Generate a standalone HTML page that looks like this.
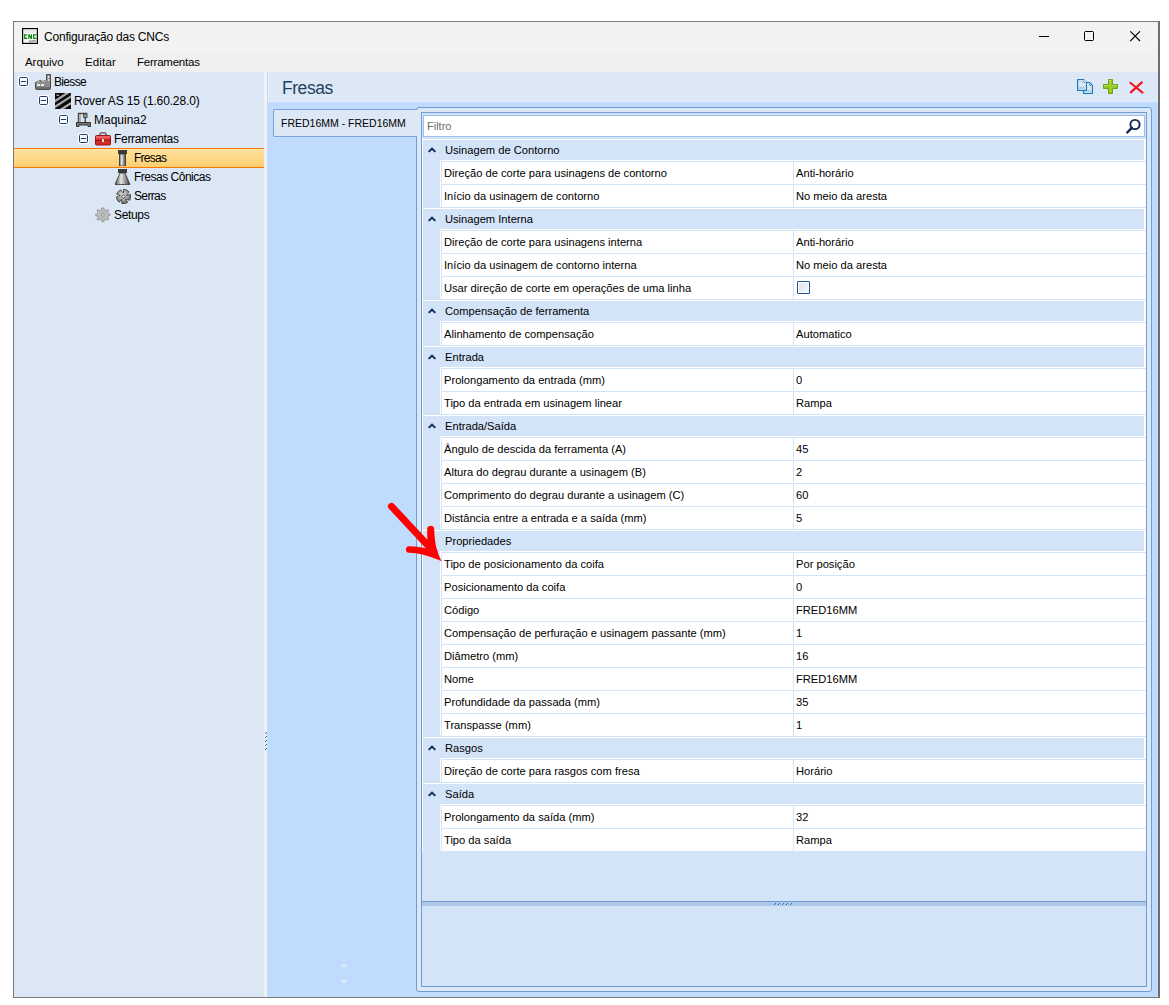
<!DOCTYPE html>
<html><head><meta charset="utf-8">
<style>
*,*:before,*:after{margin:0;padding:0;box-sizing:border-box}
html,body{width:1169px;height:1005px;background:#fff;overflow:hidden;font-family:"Liberation Sans",sans-serif;color:#000}
div,span,i,b,svg{position:absolute;display:block}
#win{left:13px;top:21px;width:1147px;height:977px;border:1px solid #7a7a7a;border-right:2px solid #6e6e6e;background:#f0f0f0}
#title{left:14px;top:22px;width:1144px;height:30px;background:#f2f2f2}
#ttext{left:44px;top:28px;font-size:12px;line-height:18px;letter-spacing:-0.21px;white-space:nowrap;color:#000}
#menu{left:14px;top:52px;width:1144px;height:20px;background:#f0f0f0}
.mi{top:55px;font-size:11.5px;line-height:14px;white-space:nowrap}
#tree{left:14px;top:72px;width:250px;height:925px;background:#dce7f5}
#split{left:264px;top:72px;width:3px;height:925px;background:#f1f1f1}
#hdr{left:268px;top:72px;width:890px;height:30px;background:#dde8f6;border-left:1px solid #e4eef9;border-bottom:1px solid #e4eef9}
#htext{left:282px;top:76px;font-size:17.5px;line-height:24px;letter-spacing:-0.45px;color:#24405f;white-space:nowrap}
#blue{left:267px;top:72px;width:891px;height:925px;background:#bfdbfd}
.trow{left:14px;height:19px;line-height:19px;width:250px;white-space:nowrap;font-size:12px}
.tt{top:0}
.ebox{width:9px;height:9px;border:1px solid #1e3a6e;border-radius:1.5px;background:#f7fafd;box-shadow:0 0 0 1px #fff}
.ebox:after{content:"";position:absolute;left:1px;top:3px;width:5px;height:1px;background:#1e3a6e}
#sel{left:14px;top:148px;width:250px;height:20px;border-top:1px solid #fb7603;border-bottom:1px solid #fb7603;background:linear-gradient(#ffeab0 0,#fee09a 8%,#fdd47e 70%,#fdce70 100%)}
#tab{left:273px;top:109px;width:144px;height:28px;border:1px solid #79a3d9;border-right:none;border-radius:2px 0 0 2px;background:#dde8f6}
#tabtext{left:281px;top:116px;font-size:10.5px;line-height:14px;white-space:nowrap}
#page{left:416px;top:107px;width:736px;height:885px;border:1px solid #6f9cd7;border-radius:3px;background:#dde8f6}
#tabjoin{left:416px;top:110px;width:3px;height:26px;background:#dde8f6}
#grid{left:421px;top:112px;width:726px;height:875px;border:1px solid #6f9cd7;background:#d3e4f9}
#filt{left:423px;top:115px;width:722px;height:22px;border:1px solid #9dbfe9;background:#fff}
#ftext{left:427px;top:119px;font-size:11px;line-height:14px;color:#6d6d6d}
#rowsbg{left:422px;top:138px;width:724px;height:714px;border-left:1px solid #fff}
.grow{left:423px;width:723px;height:23px;background:#d3e4f9;border-top:1px solid #d3e3f6}
.grow:before{content:"";position:absolute;left:-1px;top:0;width:724px;height:22px;border-top:1px solid #fff;border-left:1px solid #fff;border-right:2px solid #fff}
.grow span{left:22px;top:0;line-height:22px;font-size:11.15px;white-space:nowrap}
.chev{left:5px;top:8px}
.crow{left:440px;width:706px;height:24px;background:#fff;border-left:1px solid #fff;border-top:1px solid #fff}
.ci{left:0;top:0;width:705px;height:23px;border-left:1px solid #d3e4f9;border-top:1px solid #d3e4f9}
.n{left:2px;top:0;line-height:22px;font-size:11.15px;white-space:nowrap}
.div{left:351px;top:0;width:1px;height:22px;background:#d3e4f9}
.v{left:354px;top:0;line-height:22px;font-size:11.15px;white-space:nowrap}
.cb{left:355px;top:4px;width:13px;height:13px;border:1px solid #1f5391;border-radius:1px;background:linear-gradient(135deg,#dde2ee,#f3f5f9);box-shadow:inset 0 0 0 1px #fff}
#gspl{left:422px;top:901px;width:724px;height:1px;background:#6f9cd7}
#gband{left:422px;top:902px;width:724px;height:4px;background:#afc7e6}
</style></head><body>
<div id="win"></div>
<div id="title"></div>
<svg style="left:22px;top:28px" width="16" height="16" viewBox="0 0 16 16">
 <rect x="0.6" y="0.6" width="14.8" height="14.8" fill="#f6f6f6" stroke="#000" stroke-width="1.2"/>
 <rect x="2" y="2" width="12" height="3" fill="#e9e9e9"/>
 <g fill="#078a07"><path d="M2 6.2H5.3V7.4H3.3V9.8H5.3V11H2Z"/><path d="M6.3 6.2H7.5L8.9 8.6V6.2H10V11H8.8L7.4 8.6V11H6.3Z"/><path d="M11 6.2H14.4V7.4H12.2V9.8H14.4V11H11Z"/></g>
 <path d="M7 12H14.5V14.5H7Z" fill="#a8a8a8"/><path d="M8 12.5H10M11 13.5H14" stroke="#d8d8d8" stroke-width="0.6"/>
</svg>
<span id="ttext">Configuração das CNCs</span>
<svg style="left:1039px;top:36px" width="10" height="1"><rect width="10" height="1" fill="#000"/></svg>
<svg style="left:1084px;top:31px" width="11" height="11"><rect x="0.5" y="0.5" width="9" height="9" rx="1" fill="none" stroke="#000" stroke-width="1"/></svg>
<svg style="left:1130px;top:31px" width="11" height="11"><path d="M0.3 0.3L10 10M10 0.3L0.3 10" stroke="#000" stroke-width="1.1"/></svg>
<div id="menu"></div>
<span class="mi" style="left:25px;letter-spacing:-0.06px">Arquivo</span>
<span class="mi" style="left:85px;letter-spacing:0.15px">Editar</span>
<span class="mi" style="left:137px;letter-spacing:-0.23px">Ferramentas</span>
<div id="tree"></div>
<div id="sel"></div>
<b class="ebox" style="left:19px;top:77px"></b><div style="left:35px;top:74px"><svg width="16" height="16" viewBox="0 0 16 16">
<path d="M0.5 14.5V8.5L6 6.2V8L11.5 6V0.5H15.5V14.5Q15.5 15.5 14.5 15.5H1.5Q0.5 15.5 0.5 14.5Z" fill="#8c8c8c" stroke="#4a4a4a" stroke-width="1"/>
<path d="M1.5 8.7L5.5 7M6.5 8.2L11 6.5" stroke="#d0d0d0" stroke-width="0.8"/>
<rect x="2" y="10" width="3" height="2" fill="#ededed"/><rect x="6" y="10" width="3" height="2" fill="#ededed"/>
<rect x="12.8" y="1.8" width="1.6" height="2.2" fill="#e0e0e0"/><rect x="12.8" y="5" width="1.6" height="2.2" fill="#e0e0e0"/>
<rect x="1" y="13" width="14" height="2" fill="#6e6e6e"/>
</svg></div><span class="trow" style="left:54px;top:73px;width:auto;letter-spacing:-0.67px">Biesse</span>
<b class="ebox" style="left:39px;top:96px"></b><div style="left:55px;top:93px"><svg width="16" height="16" viewBox="0 0 16 16">
<rect width="16" height="16" fill="#0a0a0a"/>
<path d="M-1 8.75L17 -2.95M-1 14.55L17 2.85M-1 21.15L17 9.45" stroke="#a9a9a9" stroke-width="2.3"/>
<rect x="1.5" y="1.5" width="2.5" height="1.5" fill="#999"/>
</svg></div><span class="trow" style="left:74px;top:92px;width:auto;letter-spacing:-0.14px">Rover AS 15 (1.60.28.0)</span>
<b class="ebox" style="left:59px;top:115px"></b><div style="left:76px;top:112px"><svg width="16" height="16" viewBox="0 0 16 16">
<path d="M2.5 11V1.5H10.5V5.5" fill="none" stroke="#444" stroke-width="1.4"/>
<rect x="3" y="2" width="2" height="9" fill="#b0b0b0"/>
<rect x="7.5" y="2" width="3.5" height="3.5" fill="#999" stroke="#444" stroke-width="0.8"/>
<rect x="8.6" y="5.5" width="1.3" height="4.5" fill="#333"/>
<path d="M0.5 10.5H14.5V14.5H12V13H3V14.5H0.5Z" fill="#777" stroke="#333" stroke-width="1"/>
</svg></div><span class="trow" style="left:94px;top:111px;width:auto;letter-spacing:0px">Maquina2</span>
<b class="ebox" style="left:79px;top:134px"></b><div style="left:95px;top:132px"><svg width="16" height="14" viewBox="0 0 16 14">
<path d="M5 4V2.2Q5 0.8 6.5 0.8H9.5Q11 0.8 11 2.2V4" fill="none" stroke="#555" stroke-width="1.3"/>
<rect x="0.5" y="3.5" width="15" height="9.5" rx="1" fill="#d42a2a" stroke="#9b1414" stroke-width="1"/>
<rect x="1" y="4" width="14" height="2.5" fill="#f06060"/>
<rect x="1" y="8" width="14" height="1" fill="#a01818"/>
<rect x="7" y="7" width="2" height="3" fill="#ddd"/>
</svg></div><span class="trow" style="left:114px;top:130px;width:auto;letter-spacing:-0.31px">Ferramentas</span>
<div style="left:118px;top:150px"><svg width="10" height="16" viewBox="0 0 10 16">
<defs><linearGradient id="gm" x1="0" x2="1"><stop offset="0" stop-color="#555"/><stop offset="0.35" stop-color="#e8e8e8"/><stop offset="1" stop-color="#444"/></linearGradient></defs>
<rect x="0" y="0" width="9" height="4" fill="#3c3c3c"/>
<rect x="1.5" y="4" width="6" height="12" fill="url(#gm)" stroke="#333" stroke-width="0.8"/>
</svg></div><span class="trow" style="left:134px;top:149px;width:auto;letter-spacing:-0.73px">Fresas</span>
<div style="left:115px;top:169px"><svg width="16" height="16" viewBox="0 0 16 16">
<defs><linearGradient id="gc" x1="0" x2="1"><stop offset="0" stop-color="#444"/><stop offset="0.4" stop-color="#e6e6e6"/><stop offset="1" stop-color="#3a3a3a"/></linearGradient></defs>
<rect x="3" y="0" width="9" height="4" fill="#3c3c3c"/>
<path d="M5 4H10L15 15.5H0Z" fill="url(#gc)" stroke="#333" stroke-width="0.8"/>
</svg></div><span class="trow" style="left:134px;top:168px;width:auto;letter-spacing:-0.49px">Fresas Cônicas</span>
<div style="left:116px;top:189px"><svg width="15" height="15" viewBox="0 0 15 15">
<defs><radialGradient id="gs" cx="0.45" cy="0.4" r="0.65"><stop offset="0" stop-color="#e8e8e8"/><stop offset="0.6" stop-color="#9a9a9a"/><stop offset="1" stop-color="#505050"/></radialGradient></defs>
<path d="M7.50 0.30A7.2 7.2 0 0 1 13.02 2.87Q11.32 5.12 10.73 6.45L14.35 5.28A7.2 7.2 0 0 1 13.61 11.32Q10.94 10.40 9.50 10.25L11.73 13.32A7.2 7.2 0 0 1 5.76 14.49Q5.80 11.67 5.50 10.25L3.27 13.32A7.2 7.2 0 0 1 0.32 8.00Q3.01 7.18 4.27 6.45L0.65 5.28A7.2 7.2 0 0 1 4.80 0.82Q6.42 3.13 7.50 4.10L7.50 0.30Z" fill="url(#gs)" stroke="#3c3c3c" stroke-width="0.8" stroke-linejoin="round"/>
<circle cx="7.5" cy="7.5" r="1.6" fill="#fff" stroke="#333" stroke-width="0.9"/>
</svg></div><span class="trow" style="left:134px;top:187px;width:auto;letter-spacing:-0.64px">Serras</span>
<div style="left:95px;top:207px"><svg width="16" height="16" viewBox="0 0 16 16">
<g transform="translate(0.5 0.5) scale(0.92)">
<path d="M6.8 0.5H9.2L9.6 2.6L11.3 3.3L13 2L14.6 3.6L13.3 5.3L14 7L16 7.4V8.6L14 9L13.3 10.7L14.6 12.4L13 14L11.3 12.7L9.6 13.4L9.2 15.5H6.8L6.4 13.4L4.7 12.7L3 14L1.4 12.4L2.7 10.7L2 9L0 8.6V7.4L2 7L2.7 5.3L1.4 3.6L3 2L4.7 3.3L6.4 2.6Z" fill="#bdbdbd" stroke="#8a8a8a" stroke-width="0.8"/>
<circle cx="8" cy="8" r="3.3" fill="#d4d4d4" stroke="#9a9a9a" stroke-width="0.6"/>
<circle cx="8" cy="8" r="1.6" fill="#dce7f5" stroke="#777" stroke-width="0.9"/>
</g>
</svg></div><span class="trow" style="left:114px;top:206px;width:auto;letter-spacing:-0.33px">Setups</span>
<div id="split"></div>
<div id="blue"></div>
<div id="hdr"></div>
<span id="htext">Fresas</span>
<svg style="left:1077px;top:79px" width="17" height="16" viewBox="0 0 17 16">
<defs><linearGradient id="gd" x1="0" y1="0" x2="0" y2="1"><stop offset="0" stop-color="#bfe0ee"/><stop offset="0.6" stop-color="#e4f1f7"/><stop offset="0.75" stop-color="#a9d2e6"/><stop offset="1" stop-color="#a9d2e6"/></linearGradient></defs>
<path d="M6.6 3.6H12.6L15.4 6.4V14.4H6.6Z" fill="#fff" stroke="#1f78b8" stroke-width="1.3" stroke-linejoin="round"/>
<rect x="8.2" y="6.5" width="5.8" height="6.3" fill="url(#gd)"/>
<path d="M12.2 5.2Q12.6 6.4 13.9 6.7" fill="none" stroke="#1a6aa6" stroke-width="1"/>
<path d="M0.65 0.65H6.6L9.4 3.4V11.35H0.65Z" fill="#fff" stroke="#1f78b8" stroke-width="1.3" stroke-linejoin="round"/>
<rect x="2" y="2.2" width="5.8" height="7.8" fill="url(#gd)"/>
<rect x="6" y="1.5" width="2.6" height="2.6" fill="#fff"/>
<path d="M6.2 2.2Q6.6 3.4 7.9 3.7" fill="none" stroke="#1a6aa6" stroke-width="1"/>
</svg>
<svg style="left:1103px;top:79px" width="15" height="15" viewBox="0 0 15 15">
<path d="M5.5 0.5H9.5V5.5H14.5V9.5H9.5V14.5H5.5V9.5H0.5V5.5H5.5Z" fill="#92c81c" stroke="#6fa510" stroke-width="1" stroke-linejoin="round"/>
<path d="M6.2 1.6H8.8M1.6 6.6H5.6M9.4 6.6H13.4" stroke="#e6f7c0" stroke-width="0.9" stroke-dasharray="1.3 1.2"/>
<path d="M7.5 2V13" stroke="#aedb48" stroke-width="0.8"/>
</svg>
<svg style="left:1129px;top:81px" width="15" height="13" viewBox="0 0 15 13">
<path d="M1.3 1.8L13.5 11.6M12.8 1.4L1.8 11.4" stroke="#f5141e" stroke-width="2.1" stroke-linecap="round"/>
</svg>
<div id="page"></div>
<div id="tab"></div>
<span id="tabtext">FRED16MM - FRED16MM</span>
<div id="grid"></div>
<div id="filt"></div>
<span id="ftext">Filtro</span>
<svg style="left:1124px;top:117px" width="18" height="18" viewBox="0 0 18 18">
<circle cx="11" cy="7.5" r="4.6" fill="none" stroke="#10264f" stroke-width="1.9"/>
<path d="M7.8 10.8L3.2 15.5" stroke="#10264f" stroke-width="2.4" stroke-linecap="round"/>
</svg>
<div id="rowsbg"></div>
<div class="grow" style="top:138px"><svg class="chev" width="8" height="6" viewBox="0 0 8 6"><path d="M0 4.3L4 0.2L8 4.3L6.7 5.6L4 2.9L1.3 5.6Z" fill="#0f2a5c"/></svg><span>Usinagem de Contorno</span></div>
<div class="crow" style="top:160px"><div class="ci"><span class="n">Direção de corte para usinagens de contorno</span><div class="div"></div><span class="v">Anti-horário</span></div></div>
<div class="crow" style="top:183px"><div class="ci"><span class="n">Início da usinagem de contorno</span><div class="div"></div><span class="v">No meio da aresta</span></div></div>
<div class="grow" style="top:207px"><svg class="chev" width="8" height="6" viewBox="0 0 8 6"><path d="M0 4.3L4 0.2L8 4.3L6.7 5.6L4 2.9L1.3 5.6Z" fill="#0f2a5c"/></svg><span>Usinagem Interna</span></div>
<div class="crow" style="top:229px"><div class="ci"><span class="n">Direção de corte para usinagens interna</span><div class="div"></div><span class="v">Anti-horário</span></div></div>
<div class="crow" style="top:252px"><div class="ci"><span class="n">Início da usinagem de contorno interna</span><div class="div"></div><span class="v">No meio da aresta</span></div></div>
<div class="crow" style="top:275px"><div class="ci"><span class="n">Usar direção de corte em operações de uma linha</span><div class="div"></div><b class="cb"></b></div></div>
<div class="grow" style="top:299px"><svg class="chev" width="8" height="6" viewBox="0 0 8 6"><path d="M0 4.3L4 0.2L8 4.3L6.7 5.6L4 2.9L1.3 5.6Z" fill="#0f2a5c"/></svg><span>Compensação de ferramenta</span></div>
<div class="crow" style="top:321px"><div class="ci"><span class="n">Alinhamento de compensação</span><div class="div"></div><span class="v">Automatico</span></div></div>
<div class="grow" style="top:345px"><svg class="chev" width="8" height="6" viewBox="0 0 8 6"><path d="M0 4.3L4 0.2L8 4.3L6.7 5.6L4 2.9L1.3 5.6Z" fill="#0f2a5c"/></svg><span>Entrada</span></div>
<div class="crow" style="top:367px"><div class="ci"><span class="n">Prolongamento da entrada (mm)</span><div class="div"></div><span class="v">0</span></div></div>
<div class="crow" style="top:390px"><div class="ci"><span class="n">Tipo da entrada em usinagem linear</span><div class="div"></div><span class="v">Rampa</span></div></div>
<div class="grow" style="top:414px"><svg class="chev" width="8" height="6" viewBox="0 0 8 6"><path d="M0 4.3L4 0.2L8 4.3L6.7 5.6L4 2.9L1.3 5.6Z" fill="#0f2a5c"/></svg><span>Entrada/Saída</span></div>
<div class="crow" style="top:436px"><div class="ci"><span class="n">Ângulo de descida da ferramenta (A)</span><div class="div"></div><span class="v">45</span></div></div>
<div class="crow" style="top:459px"><div class="ci"><span class="n">Altura do degrau durante a usinagem (B)</span><div class="div"></div><span class="v">2</span></div></div>
<div class="crow" style="top:482px"><div class="ci"><span class="n">Comprimento do degrau durante a usinagem (C)</span><div class="div"></div><span class="v">60</span></div></div>
<div class="crow" style="top:505px"><div class="ci"><span class="n">Distância entre a entrada e a saída (mm)</span><div class="div"></div><span class="v">5</span></div></div>
<div class="grow" style="top:529px"><span>Propriedades</span></div>
<div class="crow" style="top:551px"><div class="ci"><span class="n">Tipo de posicionamento da coifa</span><div class="div"></div><span class="v">Por posição</span></div></div>
<div class="crow" style="top:574px"><div class="ci"><span class="n">Posicionamento da coifa</span><div class="div"></div><span class="v">0</span></div></div>
<div class="crow" style="top:597px"><div class="ci"><span class="n">Código</span><div class="div"></div><span class="v">FRED16MM</span></div></div>
<div class="crow" style="top:620px"><div class="ci"><span class="n">Compensação de perfuração e usinagem passante (mm)</span><div class="div"></div><span class="v">1</span></div></div>
<div class="crow" style="top:643px"><div class="ci"><span class="n">Diâmetro (mm)</span><div class="div"></div><span class="v">16</span></div></div>
<div class="crow" style="top:666px"><div class="ci"><span class="n">Nome</span><div class="div"></div><span class="v">FRED16MM</span></div></div>
<div class="crow" style="top:689px"><div class="ci"><span class="n">Profundidade da passada (mm)</span><div class="div"></div><span class="v">35</span></div></div>
<div class="crow" style="top:712px"><div class="ci"><span class="n">Transpasse (mm)</span><div class="div"></div><span class="v">1</span></div></div>
<div class="grow" style="top:736px"><svg class="chev" width="8" height="6" viewBox="0 0 8 6"><path d="M0 4.3L4 0.2L8 4.3L6.7 5.6L4 2.9L1.3 5.6Z" fill="#0f2a5c"/></svg><span>Rasgos</span></div>
<div class="crow" style="top:758px"><div class="ci"><span class="n">Direção de corte para rasgos com fresa</span><div class="div"></div><span class="v">Horário</span></div></div>
<div class="grow" style="top:782px"><svg class="chev" width="8" height="6" viewBox="0 0 8 6"><path d="M0 4.3L4 0.2L8 4.3L6.7 5.6L4 2.9L1.3 5.6Z" fill="#0f2a5c"/></svg><span>Saída</span></div>
<div class="crow" style="top:804px"><div class="ci"><span class="n">Prolongamento da saída (mm)</span><div class="div"></div><span class="v">32</span></div></div>
<div class="crow" style="top:827px"><div class="ci"><span class="n">Tipo da saída</span><div class="div"></div><span class="v">Rampa</span></div></div>
<div id="gspl"></div>
<div id="gband"></div>
<svg style="left:264px;top:730px" width="3" height="22" viewBox="0 0 3 22">
<g fill="#2a6fd6"><rect x="1" y="3" width="1" height="1"/><rect x="2" y="2" width="1" height="1"/>
<rect x="1" y="7" width="1" height="1"/><rect x="2" y="6" width="1" height="1"/>
<rect x="1" y="11" width="1" height="1"/><rect x="2" y="10" width="1" height="1"/>
<rect x="1" y="15" width="1" height="1"/><rect x="2" y="14" width="1" height="1"/>
<rect x="1" y="19" width="1" height="1"/><rect x="2" y="18" width="1" height="1"/></g>
</svg>
<svg style="left:772px;top:902px" width="22" height="3" viewBox="0 0 22 3">
<g fill="#2a6fd6"><rect x="2" y="2" width="1" height="1"/><rect x="3" y="1" width="1" height="1"/>
<rect x="6" y="2" width="1" height="1"/><rect x="7" y="1" width="1" height="1"/>
<rect x="10" y="2" width="1" height="1"/><rect x="11" y="1" width="1" height="1"/>
<rect x="14" y="2" width="1" height="1"/><rect x="15" y="1" width="1" height="1"/>
<rect x="18" y="2" width="1" height="1"/><rect x="19" y="1" width="1" height="1"/></g>
</svg>
<svg style="left:339px;top:962px" width="10" height="23" viewBox="0 0 10 23">
<path d="M1 5L5 1L9 5Z M1 18L9 18L5 22Z" fill="#dbe8f8"/>
</svg>
<svg style="left:385px;top:500px" width="62" height="66" viewBox="385 500 62 66">
<path d="M391.5 506.4L434 552" stroke="#ff0000" stroke-width="7" stroke-linecap="round"/>
<path d="M427.2 529C427.2 524.6 434.2 524.6 434.2 529C434.6 544 437 552 441.6 561.2C434 558 420 552.8 408.8 552.8C405 552.8 405 546.3 408.8 546.3C416 546.3 422 547.3 428 549C427.2 542 427.2 535 427.2 529Z" fill="#ff0000"/>
</svg>
</body></html>
